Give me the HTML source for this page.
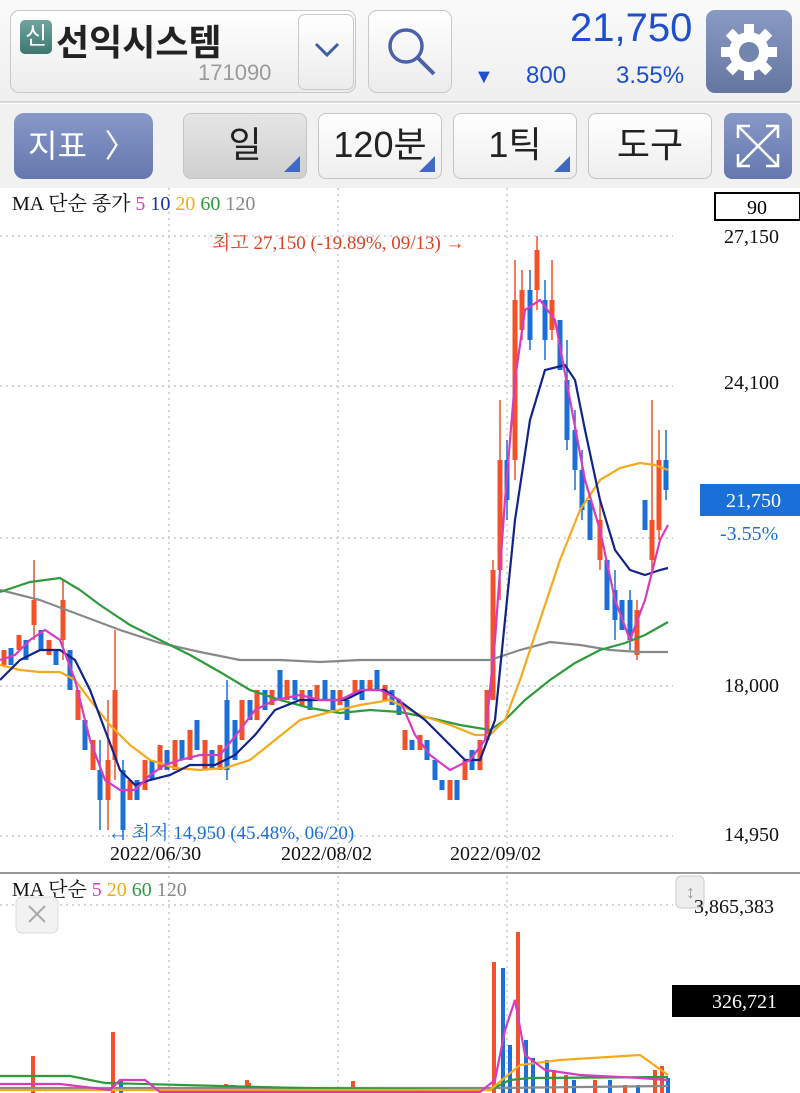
<!DOCTYPE html>
<html><head><meta charset="utf-8"><style>
*{margin:0;padding:0;box-sizing:border-box}
body{width:800px;height:1093px;overflow:hidden;background:#fff;font-family:"Liberation Sans","Noto Sans CJK KR",sans-serif;position:relative}
.hdr{position:absolute;left:0;top:0;width:800px;height:103px;background:linear-gradient(#fafafa,#efefef);border-bottom:2px solid #d8d8d8}
.tb{position:absolute;left:0;top:104px;width:800px;height:84px;background:#f1f1f1}
.box{position:absolute;border:1.5px solid #c8c8c8;border-radius:9px;background:linear-gradient(#fff,#ececec)}
.btn{position:absolute;border:1.5px solid #c4c4c4;border-radius:8px;background:linear-gradient(#fff,#eee);font-size:36px;color:#222;text-align:center;line-height:62px}
.tri{position:absolute;right:6px;bottom:6px;width:0;height:0;border-left:16px solid transparent;border-bottom:16px solid #3e6ac4}
.ser{font-family:"Liberation Serif","Noto Serif CJK SC",serif}
.t{position:absolute;white-space:nowrap}
</style></head><body>
<div class="hdr"></div>
<div class="box" style="left:10px;top:10px;width:346px;height:83px"></div>
<div class="t" style="left:20px;top:20px;width:32px;height:34px;background:linear-gradient(#6fa59e,#3d7770);border-radius:5px;color:#fff;font-size:24px;line-height:34px;text-align:center">신</div>
<div class="t" style="left:56px;top:14px;font-size:36px;color:#222;font-weight:bold">선익시스템</div>
<div class="t" style="left:198px;top:60px;font-size:22px;color:#9a9a9a">171090</div>
<div class="box" style="left:298px;top:14px;width:56px;height:76px;border-radius:7px"></div>
<svg class="t" style="left:313px;top:40px" width="28" height="20"><path d="M3 4 L14 15 L25 4" fill="none" stroke="#3d5fa8" stroke-width="3"/></svg>
<div class="box" style="left:368px;top:10px;width:84px;height:83px"></div>
<svg class="t" style="left:382px;top:22px" width="60" height="60"><circle cx="24" cy="24" r="16" fill="none" stroke="#4a62a8" stroke-width="3.5"/><path d="M36 36 L52 52" stroke="#4a62a8" stroke-width="4"/></svg>
<div class="t" style="left:570px;top:6px;font-size:40px;color:#1e4fd0">21,750</div>
<div class="t" style="left:474px;top:66px;font-size:20px;color:#1e4fd0">▼</div>
<div class="t" style="left:526px;top:62px;font-size:24px;color:#1e4fd0">800</div>
<div class="t" style="left:616px;top:62px;font-size:24px;color:#1e4fd0">3.55%</div>
<div class="t" style="left:706px;top:10px;width:86px;height:83px;border-radius:9px;background:linear-gradient(#8a9ac4,#64769f)"></div>
<svg class="t" style="left:717px;top:20px" width="64" height="64" viewBox="0 0 64 64"><g fill="#fff"><circle cx="32" cy="32" r="20"/><g id="tt"><rect x="27" y="4" width="10" height="12"/><rect x="27" y="48" width="10" height="12"/></g><use href="#tt" transform="rotate(45 32 32)"/><use href="#tt" transform="rotate(90 32 32)"/><use href="#tt" transform="rotate(135 32 32)"/></g><circle cx="32" cy="32" r="10" fill="#7384ad"/></svg>

<div class="tb"></div>
<div class="t" style="left:14px;top:113px;width:139px;height:66px;border-radius:10px;background:linear-gradient(#8898c8,#6577ad);color:#fff;font-size:32px;line-height:66px;padding-left:14px">지표 &nbsp;〉</div>
<div class="btn" style="left:183px;top:113px;width:124px;height:66px;background:linear-gradient(#e6e6e6,#cfcfcf)">일<span class="tri"></span></div>
<div class="btn" style="left:318px;top:113px;width:124px;height:66px">120분<span class="tri"></span></div>
<div class="btn" style="left:453px;top:113px;width:124px;height:66px">1틱<span class="tri"></span></div>
<div class="btn" style="left:588px;top:113px;width:124px;height:66px">도구</div>
<div class="t" style="left:724px;top:113px;width:68px;height:66px;border-radius:8px;background:linear-gradient(#8898c8,#6577ad)"></div>
<svg class="t" style="left:734px;top:122px" width="48" height="48"><g fill="none" stroke="#fff" stroke-width="2.5"><path d="M4 4 L44 44 M44 4 L4 44"/><path d="M4 16 V4 H16 M32 4 H44 V16 M44 32 V44 H32 M16 44 H4 V32"/></g></svg>

<svg class="t" style="left:0;top:188px" width="800" height="905" viewBox="0 188 800 905">
<g stroke="#c8c8c8" stroke-width="1.5" stroke-dasharray="2,4" fill="none">
<path d="M0 236 H673 M0 386 H673 M0 538 H673 M0 686 H673 M0 836 H673"/>
<path d="M169 188 V870 M338 188 V870 M507 188 V870 M169 876 V1093 M338 876 V1093 M507 876 V1093"/>
<path d="M0 905 H673"/>
</g>
<g stroke="#f4502a" stroke-width="1.5"><path d="M34 560 V640 M63 580 V660 M108 700 V830 M115 630 V780 M493 560 V700 M500 400 V600 M515 260 V480 M522 270 V340 M537 236 V310 M552 260 V340 M652 400 V570 M659 430 V540 M600 500 V570 M637 600 V660"/></g>
<g stroke="#1a6fd8" stroke-width="1.5"><path d="M100 740 V830 M123 760 V840 M227 680 V780 M507 440 V520 M530 270 V350 M545 280 V360 M567 340 V450 M575 410 V490 M582 450 V520 M666 430 V500 M615 570 V640 M630 590 V650"/></g>
<path stroke="#f4502a" stroke-width="5" fill="none" d="M4 650V665M19 635V650M34 600V625M49 640V655M63 600V640M78 690V720M93 740V770M108 760V800M115 690V760M130 780V800M145 760V790M160 745V770M175 740V770M190 730V760M205 740V770M220 745V770M242 700V740M257 690V720M272 690V705M287 680V700M302 690V705M317 685V700M340 690V705M355 680V695M370 680V690M385 685V700M405 730V750M420 735V750M450 780V800M465 760V780M480 740V770M487 690V740M493 570V700M500 460V570M515 300V460M522 290V330M537 250V290M552 300V330M600 520V560M637 610V655M652 520V560M659 460V530"/>
<path stroke="#1a6fd8" stroke-width="5" fill="none" d="M11 648V665M26 640V660M41 630V650M56 650V665M70 650V690M85 720V750M100 770V800M123 770V830M137 780V800M152 760V780M167 750V770M182 740V760M197 720V750M212 750V770M227 700V770M235 720V760M250 700V720M265 690V710M280 670V700M295 680V700M310 690V710M325 680V700M333 690V710M347 700V720M362 680V700M377 670V690M392 690V705M399 700V715M412 740V750M427 740V760M435 760V780M442 780V790M457 780V800M472 750V770M507 460V500M530 290V340M545 300V340M560 320V370M567 380V440M575 430V470M582 470V510M590 500V540M607 560V610M615 590V620M622 600V630M630 600V640M645 500V530M666 460V490"/>
<g fill="none" stroke-width="2.2">
<polyline stroke="#888" points="0,590 40,600 80,615 120,630 160,643 200,652 240,660 280,660 320,662 360,660 400,660 440,660 490,660 520,650 550,642 580,645 610,650 640,652 668,652"/>
<polyline stroke="#2e9a3e" points="0,592 30,582 60,578 80,590 100,605 130,625 160,640 190,655 220,672 250,690 280,700 310,708 340,713 370,710 400,712 430,718 460,725 490,730 505,720 525,700 550,680 575,663 600,650 625,643 645,635 668,622"/>
<polyline stroke="#f5aa1c" points="0,665 20,670 40,672 60,672 75,680 90,700 110,725 130,745 150,760 175,768 200,770 225,768 250,760 275,740 300,720 330,712 360,705 390,700 420,715 450,725 475,735 490,735 505,720 520,680 540,620 560,560 580,510 600,480 620,468 640,463 655,465 668,470"/>
<polyline stroke="#12238a" points="0,680 20,660 40,650 60,650 75,660 90,690 105,730 120,770 135,785 150,780 170,775 190,765 215,765 235,755 255,735 275,710 300,700 320,700 345,700 365,690 385,690 405,705 425,720 445,740 465,760 480,760 495,720 505,620 515,520 530,420 545,370 565,365 575,380 585,430 600,500 615,550 630,570 645,575 660,570 668,568"/>
<polyline stroke="#d63cbd" points="0,660 15,655 30,640 45,630 60,640 75,680 90,740 105,780 120,790 135,790 150,775 165,765 180,760 200,755 220,755 240,730 255,710 275,700 300,695 320,700 340,700 360,690 380,690 400,700 415,735 430,755 450,770 470,760 485,740 495,640 505,500 515,380 525,310 540,300 555,320 570,400 585,480 600,530 615,600 630,640 645,600 660,540 668,525"/>
</g>
<text x="12" y="210" font-family="Liberation Serif,Noto Serif CJK SC,serif" font-size="20" fill="#111">MA 단순 종가 <tspan fill="#d63cbd">5</tspan> <tspan fill="#1a2ea0">10</tspan> <tspan fill="#f5aa1c">20</tspan> <tspan fill="#2e9a3e">60</tspan> <tspan fill="#888">120</tspan></text>
<text x="212" y="249" font-family="Liberation Serif,Noto Serif CJK SC,serif" font-size="19" fill="#e04020">최고 27,150 (-19.89%, 09/13) →</text>
<text x="108" y="839" font-family="Liberation Serif,Noto Serif CJK SC,serif" font-size="19" fill="#1a6fd8">← 최저 14,950 (45.48%, 06/20)</text>
<g font-family="Liberation Serif,serif" font-size="20" fill="#111">
<text x="110" y="860">2022/06/30</text><text x="281" y="860">2022/08/02</text><text x="450" y="860">2022/09/02</text>
<text x="724" y="243">27,150</text><text x="724" y="389">24,100</text><text x="724" y="692">18,000</text><text x="724" y="841">14,950</text>
</g>
<rect x="715" y="193" width="85" height="27" fill="#fff" stroke="#000" stroke-width="2"/>
<text x="747" y="214" font-family="Liberation Serif,serif" font-size="20">90</text>
<rect x="700" y="484" width="100" height="32" fill="#1a6fd8"/>
<text x="726" y="507" font-family="Liberation Serif,serif" font-size="20" fill="#fff">21,750</text>
<text x="720" y="540" font-family="Liberation Serif,serif" font-size="20" fill="#1a6fd8">-3.55%</text>
<rect x="0" y="872" width="800" height="2" fill="#999"/>
<text x="12" y="896" font-family="Liberation Serif,Noto Serif CJK SC,serif" font-size="20" fill="#111">MA 단순 <tspan fill="#d63cbd">5</tspan> <tspan fill="#f5aa1c">20</tspan> <tspan fill="#2e9a3e">60</tspan> <tspan fill="#888">120</tspan></text>
<rect x="16" y="897" width="42" height="36" rx="6" fill="#f2f2f2" stroke="#ddd"/>
<path d="M29 906 L45 922 M45 906 L29 922" stroke="#aaa" stroke-width="2"/>
<rect x="676" y="876" width="28" height="32" rx="5" fill="#eee" stroke="#ccc"/>
<text x="686" y="898" font-size="18" fill="#999">↕</text>
<text x="694" y="913" font-family="Liberation Serif,serif" font-size="20" fill="#111">3,865,383</text>
<rect x="672" y="985" width="128" height="32" fill="#000"/>
<text x="712" y="1008" font-family="Liberation Serif,serif" font-size="20" fill="#fff">326,721</text>
<path stroke="#f4502a" stroke-width="4" d="M33 1093V1056M113 1093V1032M226 1093V1084M247 1093V1080M249 1093V1083M353 1093V1081M494 1093V962M518 1093V932M554 1093V1070M566 1093V1075M595 1093V1080M625 1093V1085M655 1093V1070M662 1093V1066"/>
<path stroke="#1a6fd8" stroke-width="4" d="M121 1093V1080M233 1093V1085M503 1093V968M510 1093V1045M526 1093V1040M533 1093V1058M547 1093V1060M574 1093V1080M610 1093V1080M638 1093V1085M668 1093V1078"/>
<g fill="none" stroke-width="2.2">
<polyline stroke="#888" points="0,1088 300,1088 500,1088 668,1086"/>
<polyline stroke="#2e9a3e" points="0,1076 70,1076 105,1083 300,1088 490,1090 510,1080 530,1078 668,1077"/>
<polyline stroke="#f5aa1c" points="0,1090 400,1090 490,1090 520,1065 560,1060 640,1055 668,1075"/>
<polyline stroke="#d63cbd" points="0,1084 60,1084 110,1090 120,1080 145,1080 160,1092 480,1092 495,1080 505,1030 515,1000 525,1055 545,1070 580,1075 640,1078 668,1080"/>
</g>
</svg>
</body></html>
